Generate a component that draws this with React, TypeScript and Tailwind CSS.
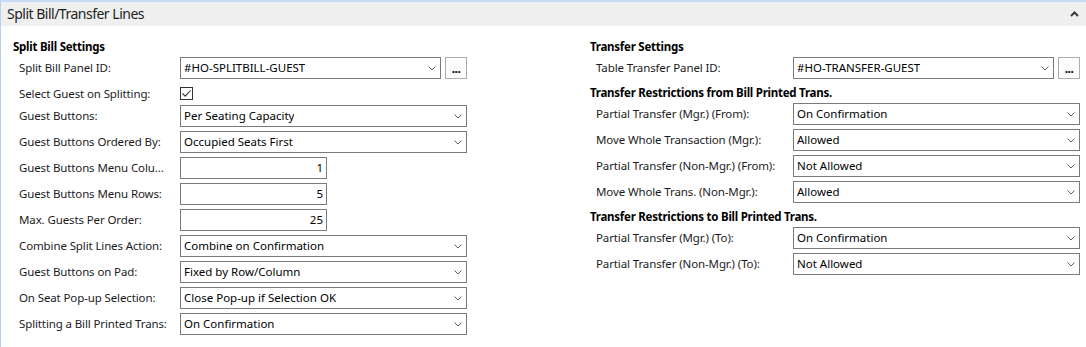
import React from 'react';

const font = { fontFamily: '"Noto Sans", "Open Sans", sans-serif' };

const Chevron: React.FC = () => (
  <svg width="8" height="5" viewBox="0 0 8 5" className="shrink-0">
    <polyline points="0.5,0.5 4,4 7.5,0.5" fill="none" stroke="#606060" strokeWidth="1" />
  </svg>
);

const Select: React.FC<{ value: string; narrow?: boolean }> = ({ value, narrow }) => (
  <div
    className={`h-[22px] ${narrow ? 'w-[261px]' : 'w-[287px]'} border border-[#7a7a7a] bg-white flex items-center justify-between pl-[3px] pr-[4px] text-[11.5px] text-black`}
  >
    <span className="truncate">{value}</span>
    <Chevron />
  </div>
);

const NumberBox: React.FC<{ value: string }> = ({ value }) => (
  <div className="h-[22px] w-[147px] border border-[#7a7a7a] bg-white flex items-center justify-end pr-[3px] text-[11.5px] text-black">
    {value}
  </div>
);

const LookupButton: React.FC = () => (
  <div className="ml-[4px] h-[22px] w-[22px] border border-[#adadad] bg-[#fdfdfd] flex items-end justify-center pb-[3px]">
    <span className="text-[12px] font-bold leading-none text-black tracking-[-0.5px]">...</span>
  </div>
);

const Row: React.FC<{ label: string; labelW: string; children: React.ReactNode; h?: string }> = ({
  label,
  labelW,
  children,
  h = 'h-[26px]',
}) => (
  <div className={`flex items-start ${h}`}>
    <div
      className={`${labelW} h-[22px] pl-[6px] flex items-center text-[11.5px] tracking-[-0.12px] text-[#1b1b1b] whitespace-nowrap overflow-hidden`}
    >
      {label}
    </div>
    <div className="flex items-center">{children}</div>
  </div>
);

const Heading: React.FC<{ text: string; top: string }> = ({ text, top }) => (
  <div className={`${top} mb-[2px] h-[16px] leading-[16px] text-[11.5px] font-bold tracking-[-0.25px] text-black whitespace-nowrap`}>
    {text}
  </div>
);

const leftRows: { label: string; value: string; kind: 'select' | 'number' }[] = [
  { label: 'Guest Buttons:', value: 'Per Seating Capacity', kind: 'select' },
  { label: 'Guest Buttons Ordered By:', value: 'Occupied Seats First', kind: 'select' },
  { label: 'Guest Buttons Menu Colu...', value: '1', kind: 'number' },
  { label: 'Guest Buttons Menu Rows:', value: '5', kind: 'number' },
  { label: 'Max. Guests Per Order:', value: '25', kind: 'number' },
  { label: 'Combine Split Lines Action:', value: 'Combine on Confirmation', kind: 'select' },
  { label: 'Guest Buttons on Pad:', value: 'Fixed by Row/Column', kind: 'select' },
  { label: 'On Seat Pop-up Selection:', value: 'Close Pop-up if Selection OK', kind: 'select' },
  { label: 'Splitting a Bill Printed Trans:', value: 'On Confirmation', kind: 'select' },
];

const fromRows = [
  { label: 'Partial Transfer (Mgr.) (From):', value: 'On Confirmation' },
  { label: 'Move Whole Transaction (Mgr.):', value: 'Allowed' },
  { label: 'Partial Transfer (Non-Mgr.) (From):', value: 'Not Allowed' },
  { label: 'Move Whole Trans. (Non-Mgr.):', value: 'Allowed' },
];

const toRows = [
  { label: 'Partial Transfer (Mgr.) (To):', value: 'On Confirmation' },
  { label: 'Partial Transfer (Non-Mgr.) (To):', value: 'Not Allowed' },
];

export default function App() {
  const LW = 'w-[167px]';
  const RW = 'w-[203px]';
  return (
    <div style={font} className="w-[1086px] h-[347px] bg-white border-l border-[#b9d0ef] overflow-hidden">
      <div className="h-[2px] bg-[#c9dcf5]" />
      <div className="h-[24px] bg-[#efefef] flex items-center justify-between pl-[6px] pr-[6px]">
        <span className="text-[14px] tracking-[-0.5px] text-[#1e1e1e] leading-none">Split Bill/Transfer Lines</span>
        <svg width="9" height="6" viewBox="0 0 9 6" className="mr-[1px]">
          <polyline points="1,5 4.5,1.5 8,5" fill="none" stroke="#3c3c3c" strokeWidth="2" />
        </svg>
      </div>

      <div className="flex">
        {/* left column */}
        <div className="pl-[12px] w-[589px]">
          <Heading text="Split Bill Settings" top="mt-[13px]" />
          <Row label="Split Bill Panel ID:" labelW={LW}>
            <Select value="#HO-SPLITBILL-GUEST" narrow />
            <LookupButton />
          </Row>
          <Row label="Select Guest on Splitting:" labelW={LW} h="h-[22px]">
            <div className="h-[22px] flex items-center">
              <div className="w-[13px] h-[13px] border border-[#333] bg-white flex items-center justify-center -mt-[2px]">
                <svg width="11" height="11" viewBox="0 0 11 11">
                  <polyline points="1.5,5.5 4.2,8.2 9.5,2.5" fill="none" stroke="#333" strokeWidth="1.1" />
                </svg>
              </div>
            </div>
          </Row>
          {leftRows.map((r) => (
            <Row key={r.label} label={r.label} labelW={LW}>
              {r.kind === 'select' ? <Select value={r.value} /> : <NumberBox value={r.value} />}
            </Row>
          ))}
        </div>

        {/* right column */}
        <div className="flex-1">
          <Heading text="Transfer Settings" top="mt-[13px]" />
          <Row label="Table Transfer Panel ID:" labelW={RW} h="h-[22px]">
            <Select value="#HO-TRANSFER-GUEST" narrow />
            <LookupButton />
          </Row>
          <Heading text="Transfer Restrictions from Bill Printed Trans." top="mt-[6px]" />
          {fromRows.map((r) => (
            <Row key={r.label} label={r.label} labelW={RW}>
              <Select value={r.value} />
            </Row>
          ))}
          <Heading text="Transfer Restrictions to Bill Printed Trans." top="mt-[2px]" />
          {toRows.map((r) => (
            <Row key={r.label} label={r.label} labelW={RW}>
              <Select value={r.value} />
            </Row>
          ))}
        </div>
      </div>
    </div>
  );
}
